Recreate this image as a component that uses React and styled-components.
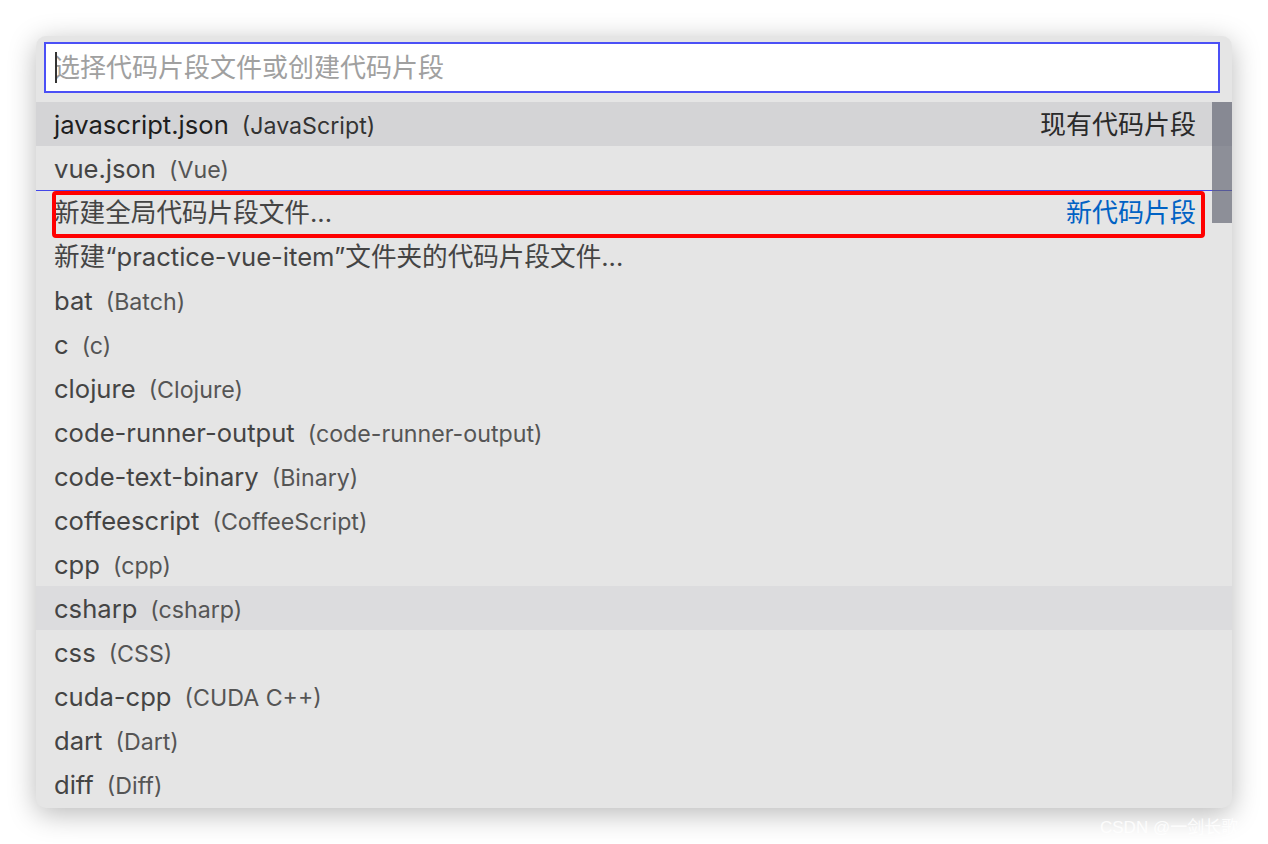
import React from "react";
import styled, { createGlobalStyle } from "styled-components";

const GlobalStyle = createGlobalStyle`
  html, body {
    margin: 0;
    padding: 0;
    background: #ffffff;
    overflow: hidden;
  }
  body {
    font-family: Inter, "Noto Sans CJK SC", "Noto Sans", sans-serif;
  }
`;

const Page = styled.div`
  position: relative;
  width: 1268px;
  height: 844px;
  padding: 36px 0 0 36px;
  box-sizing: border-box;
`;

const Panel = styled.div`
  width: 1196px;
  height: 772px;
  background: #e5e5e5;
  border-radius: 10px;
  overflow: hidden;
  box-shadow: 0 6px 28px rgba(0, 0, 0, 0.28);
  display: flex;
  flex-direction: column;
`;

const InputWrap = styled.div`
  padding: 6px 12px 9px 8px;
`;

const InputBox = styled.div`
  height: 51px;
  box-sizing: border-box;
  border: 2px solid #4b50f6;
  background: #fff;
  display: flex;
  align-items: center;
  padding-left: 8px;
  position: relative;
`;

const Caret = styled.span`
  position: absolute;
  left: 9px;
  top: 8px;
  width: 2px;
  height: 31px;
  background: #333;
`;

const Placeholder = styled.span`
  font-size: 26px;
  color: #a0a0a0;
  line-height: 1;
`;

const List = styled.div`
  position: relative;
  flex: 1;
`;

const Row = styled.div`
  position: relative;
  height: 44px;
  display: flex;
  align-items: baseline;
  padding: 2px 36px 0 18px;
  box-sizing: border-box;
  background: ${(p) => (p.$active ? "#d4d4d6" : p.$hover ? "#dcdcde" : "transparent")};

  &::before {
    content: "";
    display: ${(p) => (p.$separator ? "block" : "none")};
    position: absolute;
    left: 0;
    right: 0;
    top: 0;
    height: 1px;
    background: #4347e8;
  }
`;

const Label = styled.span`
  font-size: 25.6px;
  line-height: 42px;
  color: ${(p) => (p.$active ? "#1e1e1e" : "#444444")};
  white-space: nowrap;
`;

const Description = styled.span`
  font-size: 23.2px;
  line-height: 42px;
  color: ${(p) => (p.$active ? "#333333" : "#555555")};
  margin-left: 13px;
  white-space: nowrap;
`;

const Detail = styled.span`
  margin-left: auto;
  font-size: 26px;
  line-height: 42px;
  color: ${(p) => (p.$link ? "#0062c4" : "#2a2a2a")};
  white-space: nowrap;
`;

const Highlight = styled.div`
  position: absolute;
  left: 16px;
  right: 27px;
  top: 1px;
  bottom: -4px;
  border: 4px solid #ff0000;
  border-radius: 4px;
  pointer-events: none;
`;

const ScrollThumb = styled.div`
  position: absolute;
  top: 0;
  right: 0;
  width: 20px;
  height: 121px;
  background: rgba(95, 99, 112, 0.66);
`;

const Watermark = styled.div`
  position: absolute;
  left: 1100px;
  top: 813px;
  font-family: "Liberation Sans", "Noto Sans CJK SC", sans-serif;
  font-size: 17px;
  color: rgba(255, 255, 255, 0.85);
  white-space: nowrap;
`;

const items = [
  { label: "javascript.json", desc: "(JavaScript)", detail: "现有代码片段", active: true },
  { label: "vue.json", desc: "(Vue)" },
  { label: "新建全局代码片段文件...", detail: "新代码片段", link: true, separator: true, marked: true },
  { label: "新建“practice-vue-item”文件夹的代码片段文件..." },
  { label: "bat", desc: "(Batch)" },
  { label: "c", desc: "(c)" },
  { label: "clojure", desc: "(Clojure)" },
  { label: "code-runner-output", desc: "(code-runner-output)" },
  { label: "code-text-binary", desc: "(Binary)" },
  { label: "coffeescript", desc: "(CoffeeScript)" },
  { label: "cpp", desc: "(cpp)" },
  { label: "csharp", desc: "(csharp)", hover: true },
  { label: "css", desc: "(CSS)" },
  { label: "cuda-cpp", desc: "(CUDA C++)" },
  { label: "dart", desc: "(Dart)" },
  { label: "diff", desc: "(Diff)" },
];

export default function App() {
  return (
    <>
      <GlobalStyle />
      <Page>
        <Panel>
          <InputWrap>
            <InputBox>
              <Caret />
              <Placeholder>选择代码片段文件或创建代码片段</Placeholder>
            </InputBox>
          </InputWrap>
          <List>
            {items.map((it) => (
              <Row
                key={it.label}
                $active={it.active}
                $hover={it.hover}
                $separator={it.separator}
              >
                <Label $active={it.active}>{it.label}</Label>
                {it.desc && <Description $active={it.active}>{it.desc}</Description>}
                {it.detail && <Detail $link={it.link}>{it.detail}</Detail>}
                {it.marked && <Highlight />}
              </Row>
            ))}
            <ScrollThumb />
          </List>
        </Panel>
        <Watermark>CSDN @一剑长歌</Watermark>
      </Page>
    </>
  );
}
